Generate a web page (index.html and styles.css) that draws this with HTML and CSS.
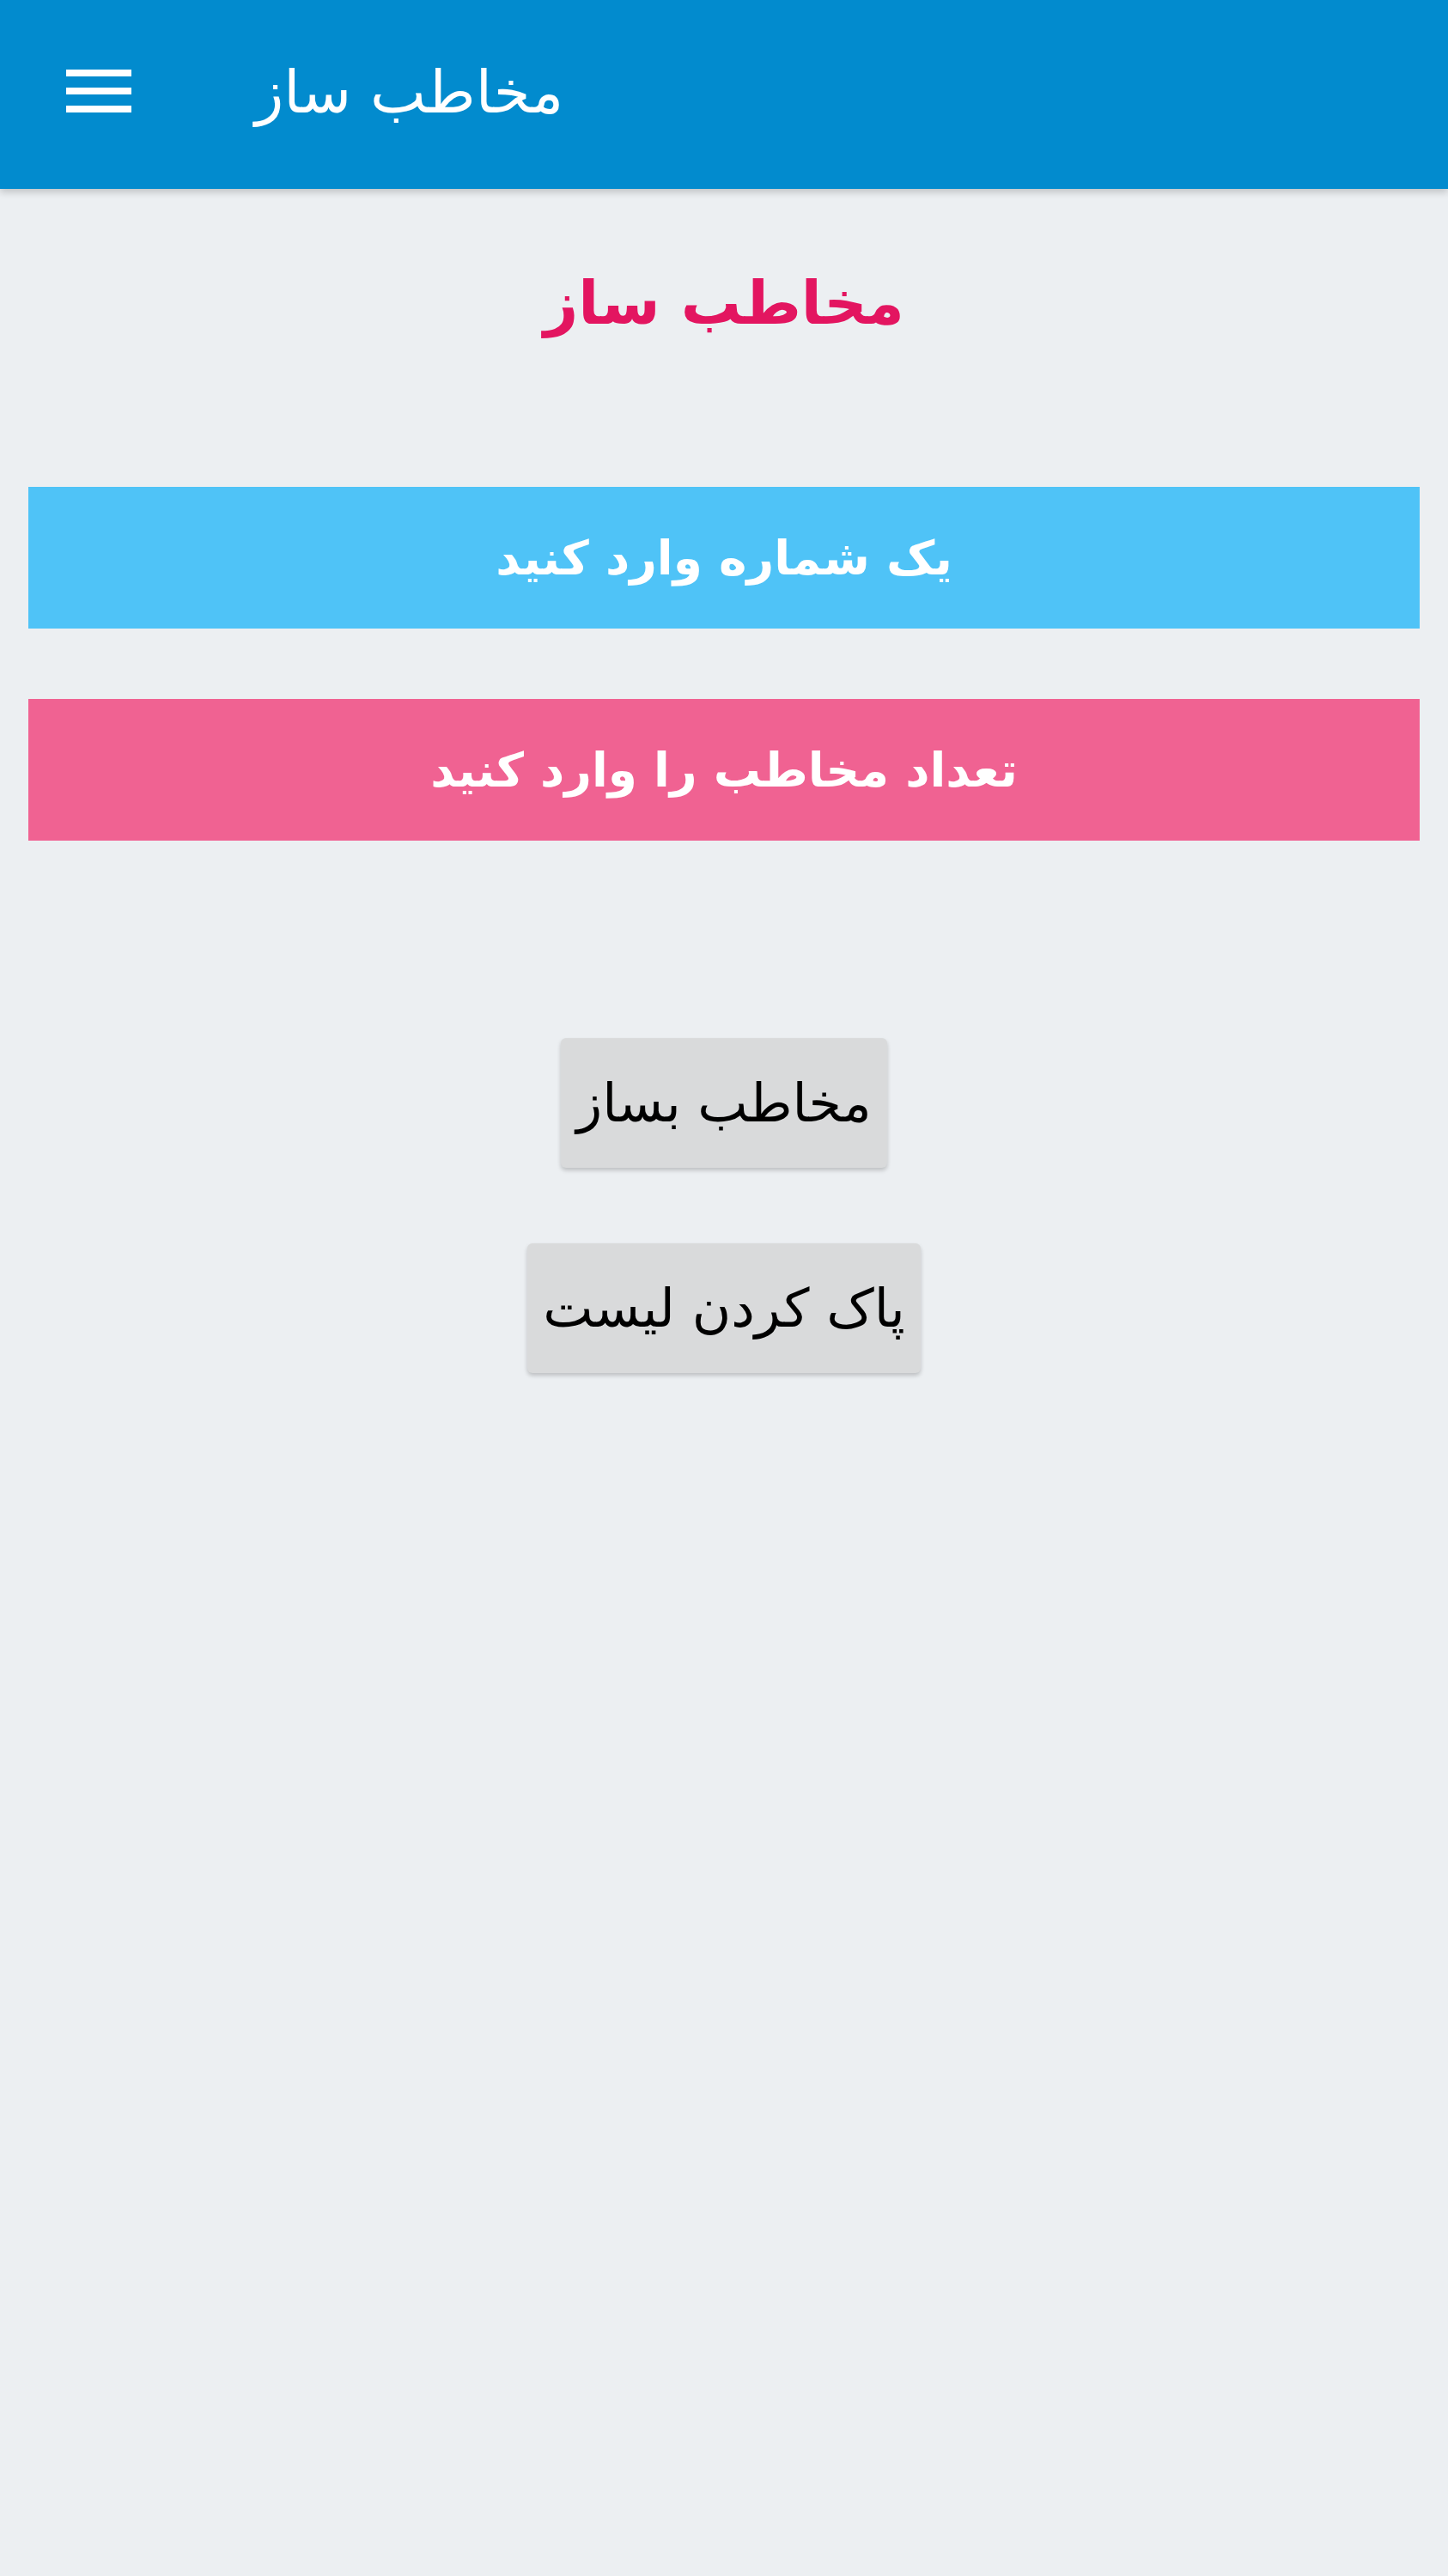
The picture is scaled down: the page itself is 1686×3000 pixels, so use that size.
FILE: index.html
```html
<!DOCTYPE html>
<html lang="fa">
<head>
<meta charset="utf-8">
<title>مخاطب ساز</title>
<link rel="stylesheet" href="styles.css">
</head>
<body>
<header class="appbar">
  <div class="menu-icon" aria-label="menu">
    <span></span><span></span><span></span>
  </div>
  <div class="appbar-title">مخاطب ساز</div>
</header>
<main class="content">
  <h1 class="page-title">مخاطب ساز</h1>
  <div class="field field-blue">یک شماره وارد کنید</div>
  <div class="field field-pink">تعداد مخاطب را وارد کنید</div>
  <div class="actions">
    <button class="btn">مخاطب بساز</button>
    <button class="btn">پاک کردن لیست</button>
  </div>
</main>
</body>
</html>
```
FILE: styles.css
```css
html, body {
  margin: 0;
  padding: 0;
}
body {
  background: #eceff2;
  font-family: "DejaVu Sans", "Noto Sans", sans-serif;
  width: 1686px;
  min-height: 3000px;
}
.appbar {
  height: 220px;
  background: #028bce;
  display: flex;
  align-items: center;
  padding-left: 77px;
  box-sizing: border-box;
  box-shadow: 0 4px 8px rgba(0,0,0,0.18);
  position: relative;
}
.menu-icon {
  width: 76px;
  height: 50px;
  margin-top: -8px;
  display: flex;
  flex-direction: column;
  justify-content: space-between;
}
.menu-icon span {
  display: block;
  height: 8px;
  background: #ffffff;
}
.appbar-title {
  margin-left: 144px;
  margin-top: -6px;
  color: #ffffff;
  font-size: 69px;
  direction: rtl;
}
.content {
  display: flex;
  flex-direction: column;
  align-items: stretch;
  padding: 0 33px;
}
.page-title {
  margin: 83px 0 0;
  height: 100px;
  line-height: 100px;
  text-align: center;
  color: #e31560;
  font-size: 70px;
  font-weight: bold;
  direction: rtl;
}
.field {
  height: 165px;
  display: flex;
  align-items: center;
  justify-content: center;
  color: #ffffff;
  font-weight: bold;
  font-size: 55px;
  direction: rtl;
}
.field-blue {
  margin-top: 164px;
  background: #4fc3f7;
}
.field-pink {
  margin-top: 82px;
  background: #f06292;
}
.actions {
  display: flex;
  flex-direction: column;
  align-items: center;
  gap: 88px;
  margin-top: 230px;
}
.btn {
  height: 151px;
  padding: 0 18px;
  background: #d9dadb;
  border: none;
  border-radius: 6px;
  box-shadow: 0 3px 5px rgba(0,0,0,0.2);
  color: #000000;
  font-family: "DejaVu Sans", "Noto Sans", sans-serif;
  font-size: 62px;
  direction: rtl;
}
```
